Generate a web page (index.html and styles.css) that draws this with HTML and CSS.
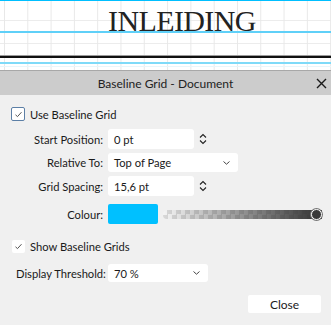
FILE: index.html
```html
<!DOCTYPE html>
<html>
<head>
<meta charset="utf-8">
<link rel="stylesheet" href="styles.css">
</head>
<body>
<div class="canvas">
  <div class="hl hl-top"></div>
  <div class="hl hl-base"></div>
  <div class="hl hl-black"></div>
  <div class="hl hl-cyan2"></div>
  <div class="hl hl-faint"></div>
  <div class="heading">INLEIDING</div>
</div>
<div class="dialog">
  <div class="titlebar">
    <span class="title">Baseline Grid - Document</span>
    <svg class="close-x" width="11" height="11" viewBox="0 0 11 11"><path d="M1 1L10 10M10 1L1 10" stroke="#1a1a1a" stroke-width="1.4" fill="none"/></svg>
  </div>
  <div class="body">
    <div class="row check-row r-use">
      <span class="cb cb-focus"><svg width="9" height="7" viewBox="0 0 9 7"><path d="M1.5 3.8L3.5 5.6L7.5 1.2" stroke="#555" stroke-width="1" fill="none"/></svg></span>
      <span class="cb-label">Use Baseline Grid</span>
    </div>
    <div class="row r-start">
      <span class="lbl">Start Position:</span>
      <span class="field short">0 pt</span>
      <svg class="spin" width="8" height="12" viewBox="0 0 8 12"><path d="M1 4.5L4 1.5L7 4.5M1 7.5L4 10.5L7 7.5" stroke="#222" stroke-width="1.1" fill="none"/></svg>
    </div>
    <div class="row r-rel">
      <span class="lbl">Relative To:</span>
      <span class="field sel wide">Top of Page<svg class="chev" width="7" height="4" viewBox="0 0 7 4"><path d="M0.5 0.5L3.5 3.2L6.5 0.5" stroke="#444" stroke-width="1" fill="none"/></svg></span>
    </div>
    <div class="row r-grid">
      <span class="lbl">Grid Spacing:</span>
      <span class="field short">15,6 pt</span>
      <svg class="spin" width="8" height="12" viewBox="0 0 8 12"><path d="M1 4.5L4 1.5L7 4.5M1 7.5L4 10.5L7 7.5" stroke="#222" stroke-width="1.1" fill="none"/></svg>
    </div>
    <div class="row r-colour">
      <span class="lbl">Colour:</span>
      <span class="swatch"></span>
      <span class="slider"><span class="knob"></span></span>
    </div>
    <div class="row check-row r-show">
      <span class="cb"><svg width="9" height="7" viewBox="0 0 9 7"><path d="M1.5 3.8L3.5 5.6L7.5 1.2" stroke="#555" stroke-width="1" fill="none"/></svg></span>
      <span class="cb-label">Show Baseline Grids</span>
    </div>
    <div class="row r-disp">
      <span class="lbl lbl-left">Display Threshold:</span>
      <span class="field sel mid">70 %<svg class="chev" width="7" height="4" viewBox="0 0 7 4"><path d="M0.5 0.5L3.5 3.2L6.5 0.5" stroke="#444" stroke-width="1" fill="none"/></svg></span>
    </div>
    <div class="row r-close">
      <span class="btn">Close</span>
    </div>
  </div>
</div>
</body>
</html>
```
FILE: styles.css
```css
* { box-sizing: border-box; }
html, body { margin: 0; padding: 0; }
body {
  width: 331px;
  height: 325px;
  overflow: hidden;
  font-family: Lato, "Noto Sans", sans-serif;
  font-size: 11.2px;
  color: #1a1a1a;
  background: #f0f0f0;
}
.canvas {
  position: relative;
  height: 71px;
  background-color: #fff;
  background-image:
    linear-gradient(to right, #e8e8e8 1px, transparent 1px),
    linear-gradient(to bottom, #ececec 1px, transparent 1px);
  background-size: 23.3px 23px, 23.3px 23px;
  background-position: 4px 0, 0 20px;
  border-bottom: 1px solid #a8a8a8;
}
.hl { position: absolute; left: 0; right: 0; }
.hl-top { top: 0; height: 1px; background: #00bfff; }
.hl-base { top: 31px; height: 2px; background: #5fd0f8; }
.hl-black { top: 55px; height: 3px; background: linear-gradient(#9a9a9a 0 1px, #111 1px 3px); }
.hl-cyan2 { top: 62px; height: 2px; background: #7fdaf8; }
.hl-faint { top: 66px; height: 1px; background: #e8f6fc; }
.heading {
  position: absolute;
  left: 108px;
  top: 4px;
  font-family: "Liberation Serif", serif;
  font-size: 30px;
  line-height: 34px;
  letter-spacing: -0.6px;
  color: #222;
}
.dialog { background: #f0f0f0; }
.titlebar {
  height: 24px;
  background: #cccccc;
  display: flex;
  align-items: center;
  justify-content: center;
  position: relative;
}
.title { font-size: 12px; color: #222; }
.close-x { position: absolute; right: 4px; top: 7px; }
.body { display: flex; flex-direction: column; }
.row { display: flex; align-items: center; white-space: nowrap; }
.check-row { padding-left: 11px; }
.cb {
  width: 13px; height: 13px;
  background: #fff;
  border-radius: 2px;
  display: flex; align-items: center; justify-content: center;
  flex: none;
}
.cb-focus { width: 14px; height: 14px; border: 1px solid #5c7fa6; }
.cb-label { margin-left: 5px; }
.r-use { margin-top: 12px; height: 14px; }
.lbl { width: 104px; flex: none; text-align: right; padding-right: 1px; }
.lbl-left { text-align: left; padding-left: 16px; padding-right: 0; }
.field {
  margin-left: 4px;
  background: #fff;
  border-radius: 3px;
  height: 20px;
  display: flex; align-items: center;
  padding-left: 6px;
  position: relative;
  flex: none;
}
.short { width: 86px; }
.wide { width: 130px; height: 19px; }
.mid { width: 100px; height: 18px; }
.chev { position: absolute; right: 8px; top: 8px; }
.mid .chev { top: 7px; }
.spin { margin-left: 5px; }
.r-start { margin-top: 8px; }
.r-rel { margin-top: 4px; }
.r-grid { margin-top: 4px; }
.r-colour { margin-top: 8px; height: 20px; }
.swatch {
  margin-left: 4px;
  width: 50px; height: 20px;
  background: #00c0ff;
  border-radius: 2px;
  flex: none;
}
.slider {
  position: relative;
  margin-left: 5px;
  width: 159px; height: 9px;
  flex: none;
  border-radius: 4px 0 0 4px;
  background:
    linear-gradient(to right, rgba(50,50,50,0), rgba(50,50,50,1)),
    repeating-conic-gradient(#d8d8d8 0 25%, #f4f4f4 0 50%) 0 0 / 9px 9px;
}
.knob {
  position: absolute;
  right: 0; top: -1px;
  width: 11px; height: 11px;
  border-radius: 50%;
  background: #3a3a3a;
  border: 1.5px solid #fff;
  box-shadow: 0 0 0 1px #777;
}
.r-show { margin-top: 16px; height: 13px; padding-left: 12px; }
.r-disp { margin-top: 11px; }
.r-close { margin-top: 13px; justify-content: flex-end; padding-right: 10px; }
.btn {
  width: 73px; height: 18px;
  background: #fff;
  border-radius: 2px;
  display: flex; align-items: center; justify-content: center;
  font-size: 12px;
}
```
